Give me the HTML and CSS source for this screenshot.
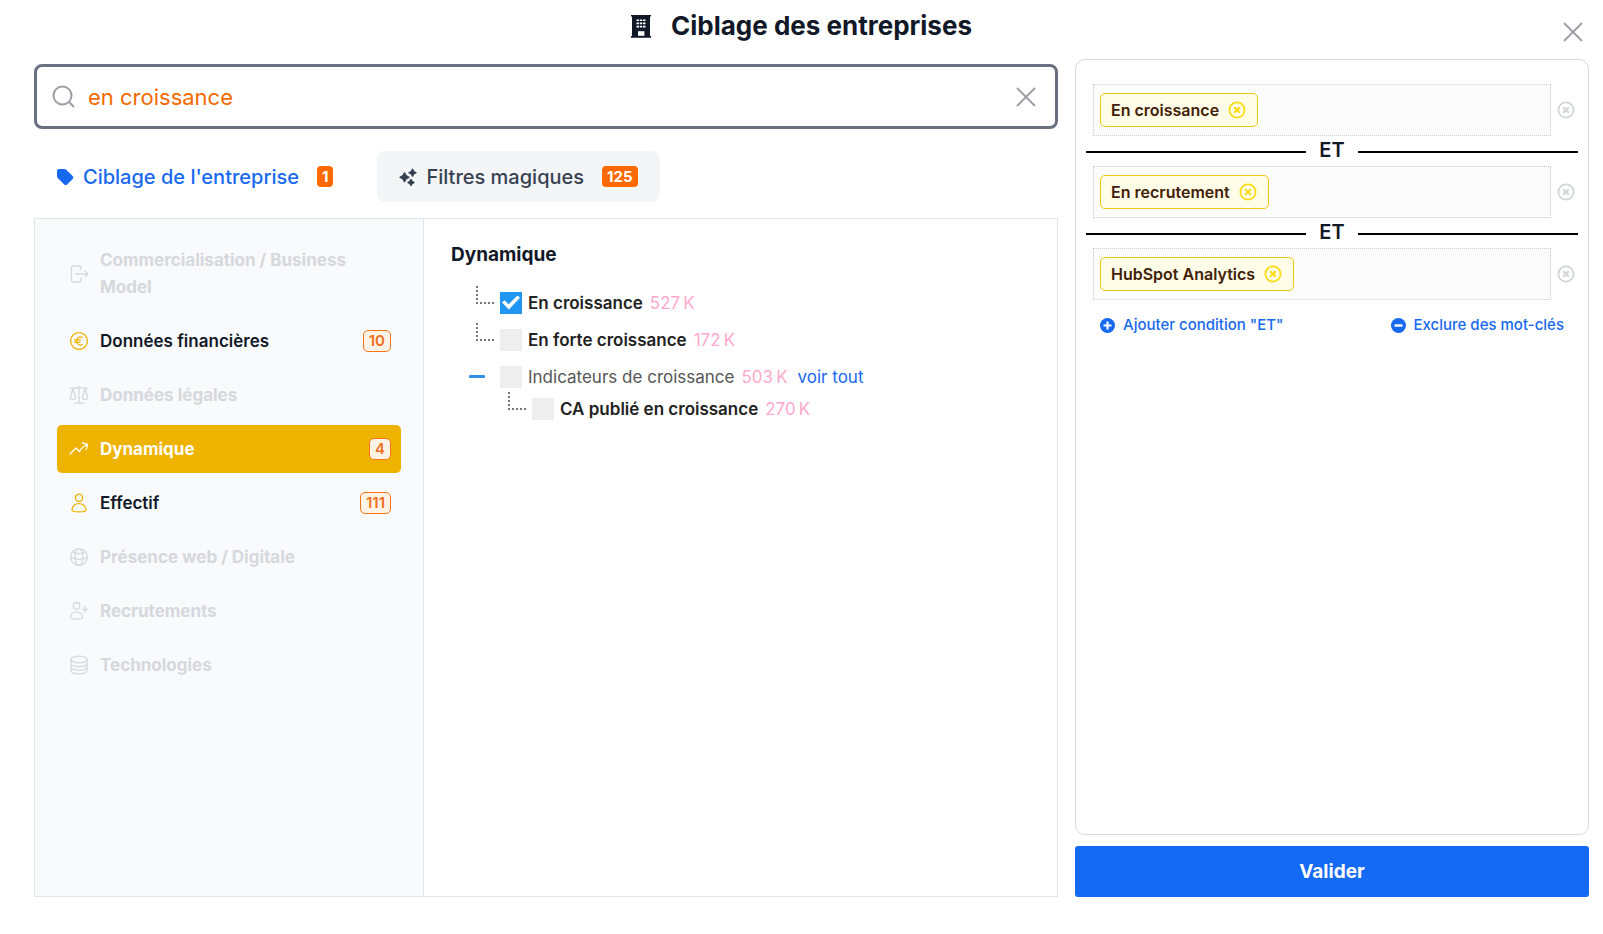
FILE: index.html
```html
<!DOCTYPE html>
<html lang="fr">
<head>
    <meta charset="UTF-8">
    <meta name="viewport" content="width=device-width, initial-scale=1.0">
    <title>Ciblage des entreprises</title>
    <link rel="stylesheet" href="styles.css">
</head>
<body>
    <!-- Shared icons -->
    <svg class="sprite" aria-hidden="true">
        <symbol id="cross" viewBox="0 0 20 20">
            <path d="M1 1l18 18M19 1L1 19" fill="none" stroke="currentColor" stroke-width="1.8"/>
        </symbol>
        <symbol id="circle-x" viewBox="0 0 18 18">
            <circle cx="9" cy="9" r="7.6" fill="none" stroke="currentColor" stroke-width="1.8"/>
            <path d="M6.2 6.2l5.6 5.6M11.8 6.2l-5.6 5.6" fill="none" stroke="currentColor" stroke-width="2.2"/>
        </symbol>
    </svg>

    <header class="header">
        <h1 class="title">
            <svg class="title-icon" viewBox="0 0 20 23" aria-hidden="true">
                <path fill="currentColor" d="M0 0h20v1.6h-1V21h1v1.8H0V21h1V1.6H0z"/>
                <path fill="none" stroke="#fff" stroke-width="1.6" d="M5.500 5.200h2.600M8.900 5.200h2.200M11.900 5.200h2.600M5.500 8.400h2.600M8.900 8.400h2.200M11.900 8.400h2.600M5.500 11.600h2.600M8.900 11.600h2.200M11.900 11.600h2.600"/>
                <path fill="#fff" d="M7 16.200h6.400v4.600H7z"/>
            </svg>
            Ciblage des entreprises
        </h1>
        <button class="icon-button close" type="button" aria-label="Fermer">
            <svg width="20" height="20"><use href="#cross"/></svg>
        </button>
    </header>

    <main class="layout">
        <div class="left">
            <div class="search">
                <svg class="search-icon" viewBox="0 0 24 24" aria-hidden="true">
                    <circle cx="10.5" cy="10.5" r="9"/>
                    <path d="M17 17l5 5"/>
                </svg>
                <input class="search-input" type="text" value="en croissance" aria-label="Rechercher">
                <button class="icon-button clear" type="button" aria-label="Effacer">
                    <svg width="20" height="20"><use href="#cross"/></svg>
                </button>
            </div>

            <div class="tabs">
                <button class="tab tab-active" type="button">
                    <svg class="tab-icon" viewBox="0 0 18 18" aria-hidden="true">
                        <path fill="currentColor" d="M1 3a2 2 0 0 1 2-2h5.400a2.500 2.500 0 0 1 1.800.7l6.200 6a2.400 2.400 0 0 1 0 3.500l-5 5a2.400 2.400 0 0 1-3.400 0L1.700 10A2.500 2.500 0 0 1 1 8.300z"/>
                    </svg>
                    <span>Ciblage de l'entreprise</span>
                    <span class="tab-count">1</span>
                </button>
                <button class="tab" type="button">
                    <svg class="tab-icon" viewBox="0 0 18 18" aria-hidden="true">
                        <path fill="currentColor" stroke="currentColor" stroke-width="1.8" stroke-linejoin="round" d="M5.500 5.200l1.400 2.700L9.600 9.300l-2.700 1.400-1.400 2.700-1.400-2.700L1.400 9.300l2.700-1.400zM13.500 1.500l1 2.200 2.200 1-2.200 1-1 2.200-1-2.200-2.200-1 2.200-1zM12 11.800l.9 1.800 1.800.9-1.800.9-.9 1.800-.9-1.800-1.800-.9 1.800-.9z"/>
                    </svg>
                    <span>Filtres magiques</span>
                    <span class="tab-count">125</span>
                </button>
            </div>

            <div class="panel">
                <nav class="sidebar">
                    <button class="category" type="button" disabled>
                        <svg class="category-icon" viewBox="0 0 20 20" aria-hidden="true">
                            <path d="M12 6V3.500A1.500 1.500 0 0 0 10.500 2H4a1.500 1.500 0 0 0-1.500 1.500v13A1.500 1.500 0 0 0 4 18h6.500a1.500 1.500 0 0 0 1.500-1.500V14M6.500 10H19M16 7l3 3-3 3"/>
                        </svg>
                        <span class="category-name">Commercialisation / Business Model</span>
                    </button>
                    <button class="category" type="button">
                        <svg class="category-icon" viewBox="0 0 20 20" aria-hidden="true">
                            <circle cx="10" cy="10" r="8.4"/>
                            <path d="M13.300 6.500a4 4 0 1 0 0 7M5.500 8.800h6M5.500 11.200h5.500"/>
                        </svg>
                        <span class="category-name">Données financières</span>
                        <span class="category-count">10</span>
                    </button>
                    <button class="category" type="button" disabled>
                        <svg class="category-icon" viewBox="0 0 20 20" aria-hidden="true">
                            <path d="M10 1v17M5.500 18.500c3-1 6-1 9 0M1 3.500c3-.3 6-1 9-1s6 .7 9 1M4 3.500L1.200 13c0 2 5.400 2 5.400 0zM16 3.500L13.300 13c0 2 5.500 2 5.500 0z"/>
                        </svg>
                        <span class="category-name">Données légales</span>
                    </button>
                    <button class="category category-active" type="button">
                        <svg class="category-icon" viewBox="0 0 20 20" aria-hidden="true">
                            <path d="M1 15l6-6 3.500 3.500C12 9.500 14 7.500 18.500 5.500M13.500 4l5.200 1.400-1.500 5.200"/>
                        </svg>
                        <span class="category-name">Dynamique</span>
                        <span class="category-count">4</span>
                    </button>
                    <button class="category" type="button">
                        <svg class="category-icon" viewBox="0 0 20 20" aria-hidden="true">
                            <circle cx="10" cy="4.8" r="3.6"/>
                            <path d="M3 17c0-8.500 14-8.500 14 0 0 2.500-14 2.500-14 0z"/>
                        </svg>
                        <span class="category-name">Effectif</span>
                        <span class="category-count">111</span>
                    </button>
                    <button class="category" type="button" disabled>
                        <svg class="category-icon" viewBox="0 0 20 20" aria-hidden="true">
                            <circle cx="10" cy="10" r="8.4"/>
                            <ellipse cx="10" cy="10" rx="4" ry="8.4"/>
                            <path d="M3.500 5c4 2 9 2 13 0M1.600 10.500c5 2.500 12 2.500 16.800 0"/>
                        </svg>
                        <span class="category-name">Présence web / Digitale</span>
                    </button>
                    <button class="category" type="button" disabled>
                        <svg class="category-icon" viewBox="0 0 20 20" aria-hidden="true">
                            <circle cx="7.5" cy="4.8" r="3.3"/>
                            <path d="M1.500 16.500c0-7.500 12-7.500 12 0 0 2-12 2-12 0zM16 5.500v6M13 8.500h6"/>
                        </svg>
                        <span class="category-name">Recrutements</span>
                    </button>
                    <button class="category" type="button" disabled>
                        <svg class="category-icon" viewBox="0 0 20 20" aria-hidden="true">
                            <ellipse cx="10" cy="4.5" rx="8" ry="3.3"/>
                            <path d="M2 4.500v11c0 4.400 16 4.400 16 0v-11M2 8.200c0 4.400 16 4.400 16 0M2 11.800c0 4.400 16 4.400 16 0"/>
                        </svg>
                        <span class="category-name">Technologies</span>
                    </button>
                </nav>

                <section class="content">
                    <h2 class="content-title">Dynamique</h2>
                    <ul class="tree">
                        <li>
                            <div class="node">
                                <span class="branch"></span>
                                <label class="leaf"><input type="checkbox" checked> En croissance</label>
                                <span class="amount">527&#8239;K</span>
                            </div>
                        </li>
                        <li>
                            <div class="node">
                                <span class="branch"></span>
                                <label class="leaf"><input type="checkbox"> En forte croissance</label>
                                <span class="amount">172&#8239;K</span>
                            </div>
                        </li>
                        <li>
                            <div class="node">
                                <button class="toggle" type="button" aria-label="Replier"></button>
                                <label><input type="checkbox"> Indicateurs de croissance</label>
                                <span class="amount">503&#8239;K</span>
                                <a class="see-all" href="#">voir tout</a>
                            </div>
                            <ul class="subtree">
                                <li>
                                    <div class="node">
                                        <span class="branch"></span>
                                        <label class="leaf"><input type="checkbox"> CA publié en croissance</label>
                                        <span class="amount">270&#8239;K</span>
                                    </div>
                                </li>
                            </ul>
                        </li>
                    </ul>
                </section>
            </div>
        </div>

        <aside class="right">
            <div class="conditions">
                <div class="condition">
                    <div class="condition-box">
                        <span class="chip">En croissance
                            <button class="icon-button" type="button" aria-label="Retirer En croissance"><svg width="18" height="18"><use href="#circle-x"/></svg></button>
                        </span>
                    </div>
                    <button class="icon-button remove" type="button" aria-label="Supprimer la condition"><svg width="18" height="18"><use href="#circle-x"/></svg></button>
                </div>
                <div class="separator"><span>ET</span></div>
                <div class="condition">
                    <div class="condition-box">
                        <span class="chip">En recrutement
                            <button class="icon-button" type="button" aria-label="Retirer En recrutement"><svg width="18" height="18"><use href="#circle-x"/></svg></button>
                        </span>
                    </div>
                    <button class="icon-button remove" type="button" aria-label="Supprimer la condition"><svg width="18" height="18"><use href="#circle-x"/></svg></button>
                </div>
                <div class="separator"><span>ET</span></div>
                <div class="condition">
                    <div class="condition-box">
                        <span class="chip">HubSpot Analytics
                            <button class="icon-button" type="button" aria-label="Retirer HubSpot Analytics"><svg width="18" height="18"><use href="#circle-x"/></svg></button>
                        </span>
                    </div>
                    <button class="icon-button remove" type="button" aria-label="Supprimer la condition"><svg width="18" height="18"><use href="#circle-x"/></svg></button>
                </div>
                <div class="actions">
                    <a class="action" href="#">
                        <svg width="15" height="15" viewBox="0 0 15 15" aria-hidden="true">
                            <circle cx="7.5" cy="7.5" r="7.5" fill="currentColor"/>
                            <path d="M7.500 3.500v8M3.500 7.500h8" stroke="#fff" stroke-width="2.2"/>
                        </svg>
                        Ajouter condition "ET"
                    </a>
                    <a class="action" href="#">
                        <svg width="15" height="15" viewBox="0 0 15 15" aria-hidden="true">
                            <circle cx="7.5" cy="7.5" r="7.5" fill="currentColor"/>
                            <path d="M3.500 7.500h8" stroke="#fff" stroke-width="2.4"/>
                        </svg>
                        Exclure des mot-clés
                    </a>
                </div>
            </div>
            <button class="submit" type="button">Valider</button>
        </aside>
    </main>
</body>
</html>
```

FILE: styles.css
```css
/* Basic reset */
* {
    margin: 0;
    padding: 0;
    box-sizing: border-box;
}

body {
    display: flex;
    flex-direction: column;
    min-height: 100vh;
    font-family: Inter, 'Liberation Sans', sans-serif;
    color: #111827;
    background-color: #fff;
}

button {
    font-family: inherit;
    background: none;
    border: none;
    cursor: pointer;
}

a {
    color: #1769f0;
    text-decoration: none;
}

ul {
    list-style: none;
}

svg {
    display: block;
    flex-shrink: 0;
}

.sprite {
    position: absolute;
    width: 0;
    height: 0;
}

.icon-button {
    display: flex;
    align-items: center;
    justify-content: center;
    color: inherit;
}

/* Header */
.header {
    display: grid;
    grid-template-columns: 1fr auto 1fr;
    align-items: center;
    height: 52px;
    padding: 0 20px;
}

.title {
    grid-column: 2;
    display: flex;
    align-items: center;
    gap: 20px;
    font-size: 26px;
    font-weight: 700;
    line-height: 32px;
}

.title-icon {
    width: 20px;
    height: 23px;
}

.close {
    align-self: end;
    justify-self: end;
    height: 40px;
    color: #9a9da3;
}

/* Layout */
.layout {
    flex: 1;
    display: grid;
    grid-template-columns: minmax(0, 1fr) 514px;
    gap: 17px;
    padding: 7px 14px 37px 34px;
}

.left {
    display: flex;
    flex-direction: column;
    padding-top: 5px;
}

/* Search */
.search {
    display: flex;
    align-items: center;
    gap: 12px;
    height: 65px;
    padding: 0 19px 0 15px;
    border: 3px solid #6b7080;
    border-radius: 8px;
}

.search-icon {
    width: 24px;
    height: 24px;
    fill: none;
    stroke: #9a9da3;
    stroke-width: 2;
}

.search-input {
    flex: 1;
    min-width: 0;
    border: none;
    outline: none;
    background: none;
    font-family: inherit;
    font-size: 22px;
    color: #f56a00;
}

.clear {
    color: #9a9da3;
}

/* Tabs */
.tabs {
    display: flex;
    gap: 22px;
    padding: 22px 0 16px;
}

.tab {
    display: flex;
    align-items: center;
    height: 51px;
    padding: 0 22px;
    border-radius: 8px;
    background-color: #f3f5f7;
    font-size: 20px;
    font-weight: 500;
    color: #374151;
}

.tab-active {
    background: none;
    color: #1769f0;
}

.tab-icon {
    width: 18px;
    height: 18px;
    margin-right: 9px;
}

.tab-count {
    margin-left: 18px;
    padding: 0 5px;
    border-radius: 4px;
    background-color: #ff6a00;
    font-size: 15px;
    font-weight: 700;
    line-height: 21px;
    color: #fff;
}

/* Panel */
.panel {
    flex: 1;
    display: flex;
    border: 1px solid #e2e5e9;
}

.sidebar {
    display: flex;
    flex-direction: column;
    gap: 6px;
    width: 389px;
    flex-shrink: 0;
    padding: 18px 22px;
    border-right: 1px solid #e2e5e9;
    background-color: #f9fafc;
}

.category {
    display: flex;
    align-items: center;
    gap: 11px;
    min-height: 48px;
    padding: 10px 10px 10px 12px;
    border-radius: 5px;
    font-size: 17px;
    font-weight: 600;
    line-height: 27px;
    text-align: left;
    color: #111827;
}

.category:disabled {
    font-weight: 700;
    color: #d5d8dc;
    cursor: default;
}

.category-active {
    background-color: #eeb200;
    font-weight: 700;
    color: #fff;
}

.category-icon {
    width: 20px;
    height: 20px;
    fill: none;
    stroke: #eeb200;
    stroke-width: 1.3;
    stroke-linecap: round;
    stroke-linejoin: round;
}

.category:disabled .category-icon,
.category-active .category-icon {
    stroke: currentColor;
}

.category-name {
    flex: 1;
}

.category-count {
    padding: 0 5px;
    border: 1px solid #f97316;
    border-radius: 5px;
    background-color: #fff3e6;
    font-size: 15px;
    font-weight: 600;
    line-height: 20px;
    color: #f0701a;
}

/* Content */
.content {
    flex: 1;
    padding: 23px 27px;
}

.content-title {
    margin-bottom: 16px;
    font-size: 19px;
    font-weight: 700;
    line-height: 26px;
}

.tree {
    padding-left: 18px;
}

.node {
    display: flex;
    align-items: center;
    height: 37px;
    font-size: 17px;
    color: #555;
}

.node label {
    display: flex;
    align-items: center;
    gap: 6px;
}

.node .leaf {
    font-weight: 600;
    color: #222;
}

.branch {
    width: 18px;
    height: 18px;
    margin: 0 6px 16px 7px;
    border-left: 2px dotted #777;
    border-bottom: 2px dotted #777;
}

.toggle {
    width: 16px;
    height: 3px;
    margin-right: 15px;
    border-radius: 1px;
    background-color: #2f8fe6;
}

.node input {
    display: grid;
    place-items: center;
    width: 22px;
    height: 22px;
    appearance: none;
    background-color: #eee;
}

.node input:checked {
    background-color: #2196f3;
}

.node input:checked::before {
    content: '';
    width: 18px;
    height: 14px;
    background-color: #fff;
    clip-path: polygon(0 50%, 14% 34%, 37% 62%, 86% 0, 100% 16%, 38% 100%);
}

.amount {
    margin-left: 7px;
    color: #ffa9cd;
}

.see-all {
    margin-left: 10px;
}

.subtree {
    padding-left: 32px;
}

.subtree .node {
    height: 28px;
}

/* Conditions */
.right {
    display: flex;
    flex-direction: column;
    gap: 11px;
}

.conditions {
    flex: 1;
    padding: 24px 10px;
    border: 1px solid #d5d7da;
    border-radius: 10px;
}

.condition {
    display: flex;
    align-items: center;
    gap: 6px;
    padding: 0 3px 0 7px;
}

.condition-box {
    flex: 1;
    height: 52px;
    padding: 8px 6px;
    border: 1px dotted #ccc;
    background-color: #fcfcfc;
}

.remove {
    color: #d3d5d8;
}

.chip {
    display: inline-flex;
    align-items: center;
    gap: 9px;
    height: 34px;
    padding: 0 11px 0 10px;
    border: 1px solid #f0c810;
    border-radius: 5px;
    background-color: #fffde8;
    font-size: 16px;
    font-weight: 600;
    color: #422006;
}

.chip .icon-button {
    color: #fadb14;
}

.separator {
    display: flex;
    align-items: center;
    height: 30px;
    padding-top: 2px;
    font-size: 20px;
    font-weight: 600;
}

.separator span {
    width: 52px;
    padding-bottom: 5px;
    text-align: center;
}

.separator::before,
.separator::after {
    content: '';
    flex: 1;
    height: 2px;
    background-color: #000;
}

.actions {
    display: flex;
    justify-content: space-between;
    padding: 14px 14px 0;
}

.action {
    display: flex;
    align-items: center;
    gap: 8px;
    font-size: 15px;
    font-weight: 500;
    line-height: 22px;
}

.submit {
    height: 51px;
    border-radius: 3px;
    background-color: #146af5;
    font-size: 19px;
    font-weight: 700;
    color: #fff;
}
```
